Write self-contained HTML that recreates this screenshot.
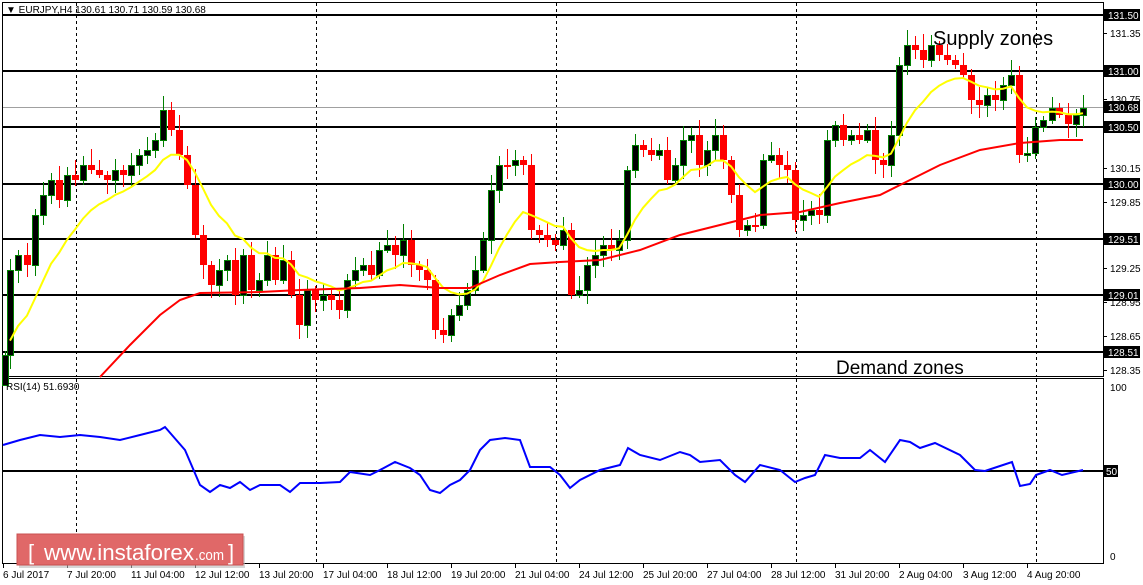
<!DOCTYPE html>
<html><head><meta charset="utf-8"><style>
html,body{margin:0;padding:0;background:#fff;width:1143px;height:585px;overflow:hidden}
svg{display:block}
text{font-family:"Liberation Sans",sans-serif}
</style></head><body>
<svg id="s" width="1143" height="585" xmlns="http://www.w3.org/2000/svg" shape-rendering="crispEdges">
<rect x="0" y="0" width="1143" height="585" fill="#fff"/>
<g id="grid"></g>
<g id="candles"></g>
<g id="lines" shape-rendering="auto"></g>
<g id="axis"></g>
</svg>
<script>
var NS="http://www.w3.org/2000/svg";
function el(p,t,a,txt){var e=document.createElementNS(NS,t);for(var k in a)e.setAttribute(k,a[k]);if(txt!=null)e.textContent=txt;document.getElementById(p).appendChild(e);return e;}
el("grid","rect",{x:2.5,y:2.5,width:1101,height:374,fill:"none",stroke:"#000"});
el("grid","rect",{x:2.5,y:378.5,width:1101,height:185,fill:"none",stroke:"#000"});
[76,316,556,796,1036].forEach(function(x){
 el("grid","line",{x1:x+.5,y1:3,x2:x+.5,y2:376,stroke:"#000","stroke-dasharray":"3,3"});
 el("grid","line",{x1:x+.5,y1:379,x2:x+.5,y2:563,stroke:"#000","stroke-dasharray":"3,3"});
});
el("grid","line",{x1:3,y1:107.5,x2:1103,y2:107.5,stroke:"#a0a0a0"});
var lv=[[15,"131.50"],[71,"131.00"],[127,"130.50"],[184,"130.00"],[239,"129.51"],[295,"129.01"],[352,"128.51"]];
lv.forEach(function(l){el("grid","rect",{x:3,y:l[0]-1,width:1100,height:2,fill:"#000"});});
el("grid","rect",{x:3,y:470,width:1100,height:2,fill:"#000"});
var C=[[5,355],[10,270],[18,255],[27,265],[35,215],[43,195],[51,180],[59,200],[67,175],[75,180],[83,165],[91,170],[99,175],[107,180],[115,170],[123,175],[131,165],[139,155],[147,150],[155,140],[163,110],[171,130],[179,155],[187,185],[195,235],[203,265],[211,285],[219,270],[227,260],[235,295],[243,255],[251,290],[259,280],[267,255],[275,280],[283,260],[291,295],[299,325],[307,290],[315,300],[323,295],[331,300],[339,310],[347,280],[355,270],[363,265],[371,275],[379,250],[387,245],[395,255],[403,240],[411,265],[419,270],[427,280],[435,330],[443,335],[451,315],[459,305],[467,290],[475,270],[483,240],[491,190],[499,165],[507,165],[515,160],[523,165],[531,230],[539,235],[547,240],[555,245],[563,230],[571,295],[579,290],[587,265],[595,255],[603,245],[611,250],[619,240],[627,170],[635,145],[643,150],[651,155],[659,150],[667,180],[675,165],[683,140],[691,135],[699,165],[707,150],[715,135],[723,160],[731,195],[739,230],[747,225],[755,225],[763,160],[771,155],[779,165],[787,170],[795,220],[803,215],[811,210],[819,215],[827,140],[835,125],[843,140],[851,135],[859,140],[867,130],[875,160],[883,165],[891,135],[899,65],[907,45],[915,50],[923,60],[931,45],[939,55],[947,60],[955,65],[963,75],[971,100],[979,105],[987,95],[995,100],[1003,85],[1011,75],[1019,155],[1027,153],[1035,127],[1043,120],[1052,108],[1059,115],[1068,124],[1076,115],[1083,108]];
var prev=380;
C.forEach(function(c,i){
 var x=c[0],o=prev,cl=c[1];prev=cl;
 if(i==0)o=385;
 var top=Math.min(o,cl),bot=Math.max(o,cl);if(bot-top<2){bot=top+2;}
 var wt=top-(4+(i*7)%13),wb=bot+(3+(i*11)%12);
 var up=cl<o;
 el("candles","line",{x1:x+.5,y1:Math.max(wt,4),x2:x+.5,y2:Math.min(wb,375),stroke:up?"#008000":"#f00"});
 if(up) el("candles","rect",{x:x-2.5,y:top+.5,width:6,height:bot-top,fill:"#000",stroke:"#008000"});
 else el("candles","rect",{x:x-3,y:top,width:7,height:bot-top,fill:"#f00"});
});
var e=C[0][1],pts=[];C.forEach(function(c,i){e=i==0?c[1]:e+(c[1]-e)*0.17;if(i>0)pts.push(c[0]+","+e.toFixed(1));});
el("lines","polyline",{points:pts.join(" "),fill:"none",stroke:"#ffff00","stroke-width":2});
var red="100,377 130,345 160,315 180,300 200,293 260,292 300,290 360,288 400,285 440,288 470,288 500,275 530,264 560,262 600,260 640,250 680,235 720,225 760,215 800,212 840,203 880,195 900,185 940,165 980,150 1020,143 1060,140 1083,140";
el("lines","polyline",{points:red,fill:"none",stroke:"#f00","stroke-width":2});
var rsi="3,445 20,440 40,435 60,437 80,435 100,437 120,440 140,435 160,430 165,427 185,450 200,485 210,492 220,485 230,488 240,482 250,490 260,485 280,485 290,492 300,483 320,483 340,482 350,472 370,475 380,470 395,462 410,468 420,475 430,490 440,493 450,485 460,480 470,470 480,450 490,440 505,438 520,440 530,467 550,467 560,475 570,488 580,480 600,470 620,465 628,448 640,455 660,460 680,452 690,455 700,462 720,460 735,475 745,482 760,465 780,470 795,482 805,478 815,475 825,455 840,458 860,458 870,450 885,462 900,440 910,442 920,448 935,443 960,455 975,470 985,471 1000,466 1012,462 1020,486 1030,484 1036,475 1050,470 1062,475 1083,470";
el("lines","polyline",{points:rsi,fill:"none",stroke:"#0000ff","stroke-width":2});
var al=[[33,"131.35"],[99,"130.75"],[168,"130.15"],[202,"129.85"],[268,"129.25"],[302,"128.95"],[336,"128.65"],[370,"128.35"]];
al.forEach(function(a){el("axis","line",{x1:1103,y1:a[0]+.5,x2:1107,y2:a[0]+.5,stroke:"#000"});el("axis","text",{x:1110,y:a[0]+4,"font-size":"10"},a[1]);});
lv.concat([[107,"130.68"]]).forEach(function(l){el("axis","rect",{x:1104,y:l[0]-6,width:36,height:12,fill:"#000"});el("axis","text",{x:1108,y:l[0]+4,"font-size":"10",fill:"#fff"},l[1]);});
el("axis","text",{x:1110,y:391,"font-size":"10"},"100");
el("axis","rect",{x:1104,y:465,width:14,height:12,fill:"#000"});
el("axis","text",{x:1106,y:475,"font-size":"10",fill:"#fff"},"50");
el("axis","text",{x:1110,y:560,"font-size":"10"},"0");
var dl=["6 Jul 2017","7 Jul 20:00","11 Jul 04:00","12 Jul 12:00","13 Jul 20:00","17 Jul 04:00","18 Jul 12:00","19 Jul 20:00","21 Jul 04:00","24 Jul 12:00","25 Jul 20:00","27 Jul 04:00","28 Jul 12:00","31 Jul 20:00","2 Aug 04:00","3 Aug 12:00","4 Aug 20:00"];
dl.forEach(function(d,i){var x=3+i*64;el("axis","line",{x1:x+.5,y1:563,x2:x+.5,y2:568,stroke:"#000"});el("axis","text",{x:x,y:578,"font-size":"10"},d);});
el("axis","text",{x:6,y:13,"font-size":"10"},"\u25BC  EURJPY,H4  130.61 130.71 130.59 130.68");
el("axis","text",{x:6,y:390,"font-size":"10"},"RSI(14) 51.6930");
el("axis","text",{x:933,y:45,"font-size":"20"},"Supply zones");
el("axis","text",{x:836,y:374,"font-size":"19"},"Demand zones");
el("axis","rect",{x:19,y:536,width:226,height:32,fill:"#bbb",opacity:.6});
el("axis","rect",{x:17,y:534,width:226,height:31,fill:"#e06868",stroke:"#c85050"});
el("axis","text",{x:28,y:560,"font-size":"22",fill:"#fff"},"[");
el("axis","text",{x:44,y:560,"font-size":"22",fill:"#fff",textLength:150,lengthAdjust:"spacingAndGlyphs"},"www.instaforex");
el("axis","text",{x:195,y:560,"font-size":"15",fill:"#fff",textLength:29,lengthAdjust:"spacingAndGlyphs"},".com");
el("axis","text",{x:228,y:560,"font-size":"22",fill:"#fff"},"]");
</script>
</body></html>
